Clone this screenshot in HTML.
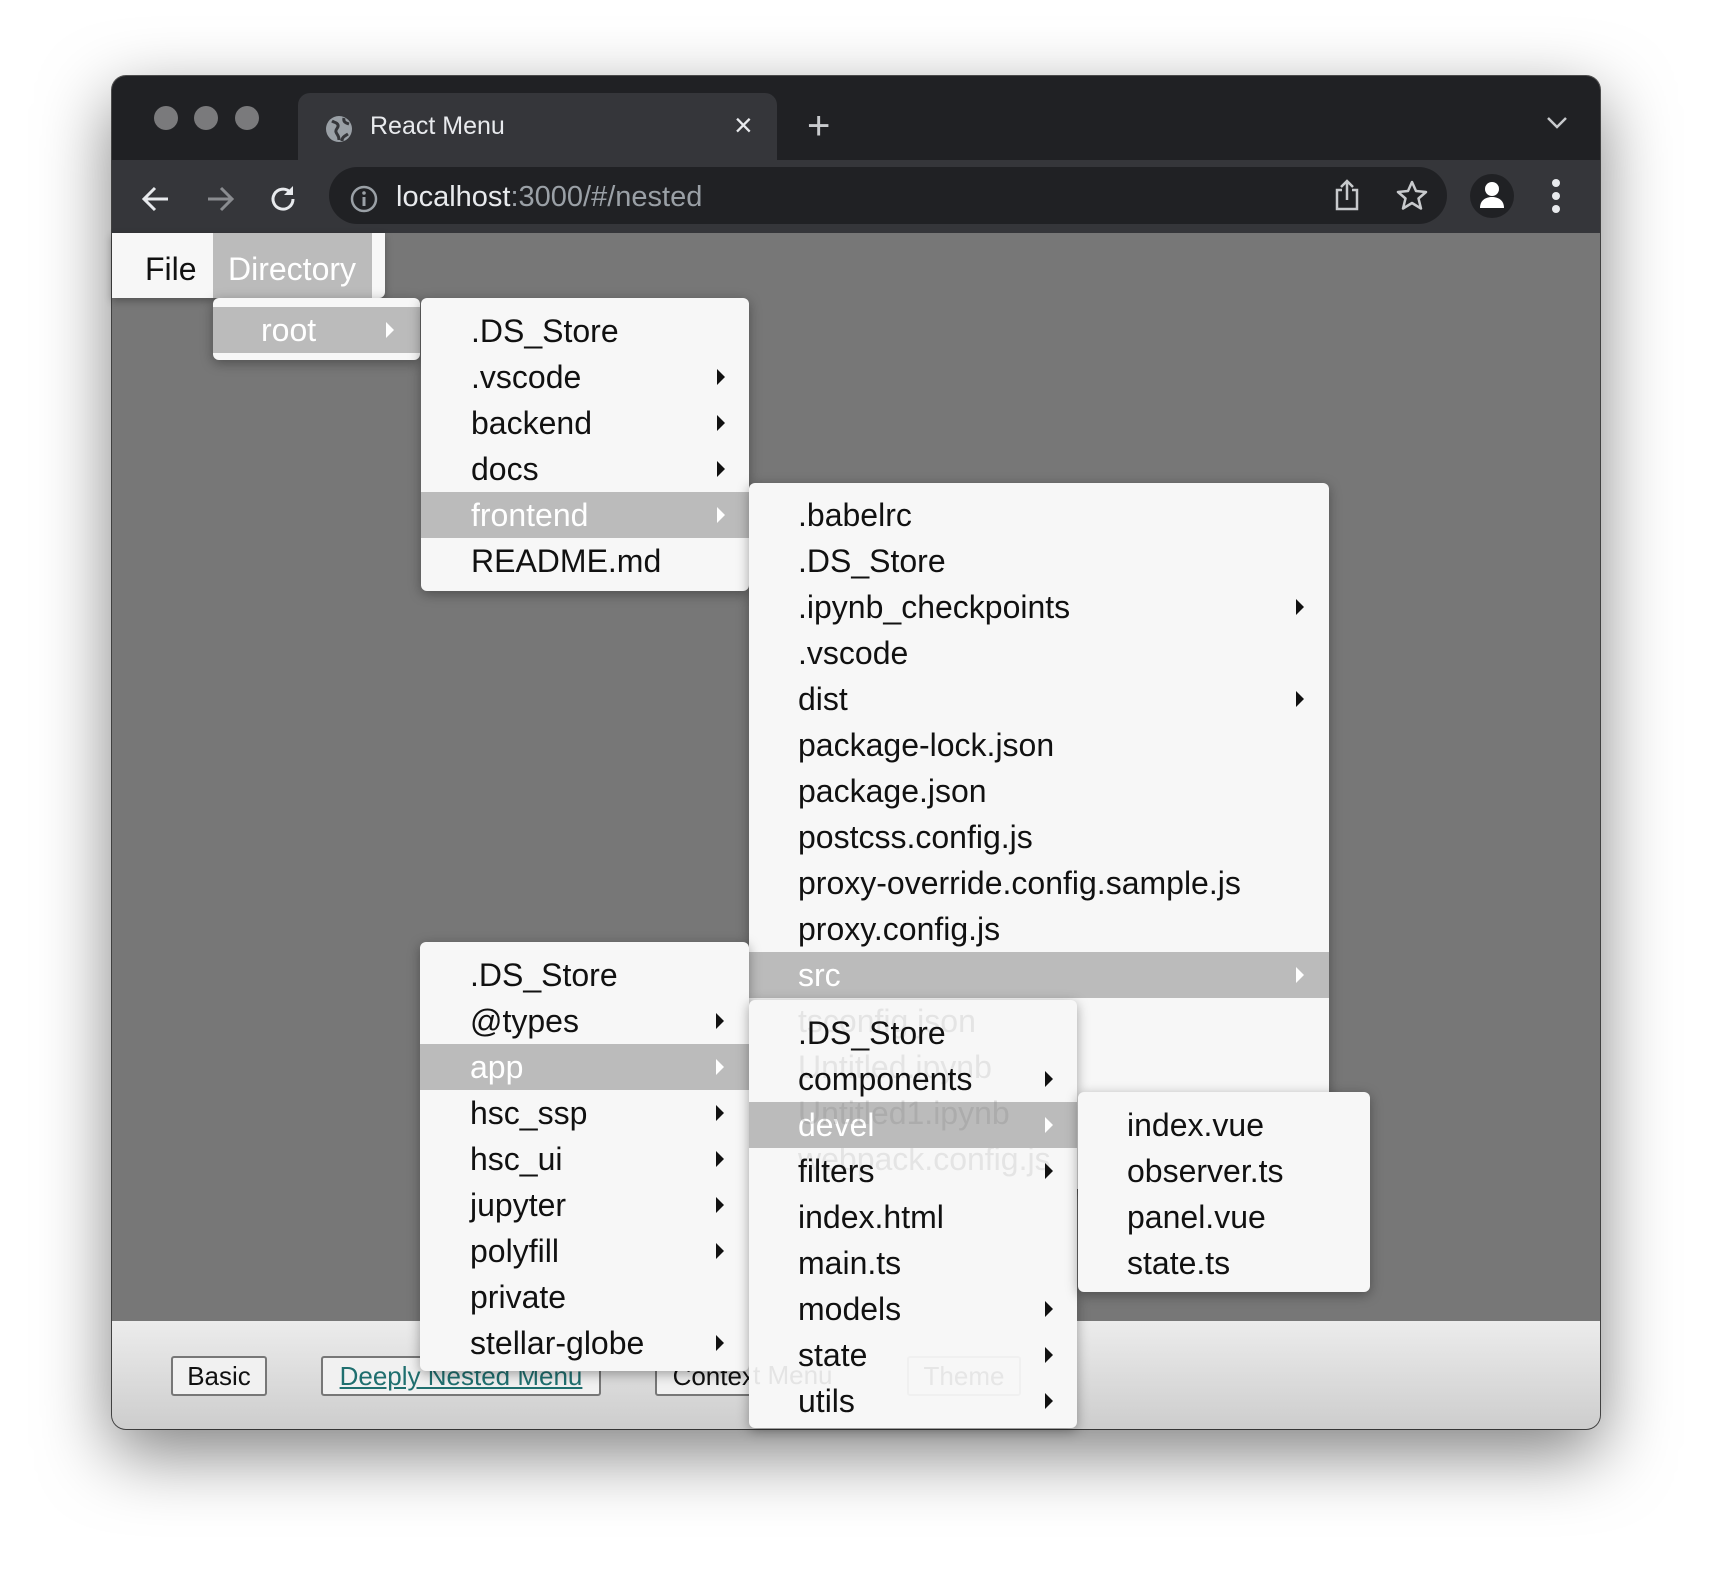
<!DOCTYPE html>
<html><head><meta charset="utf-8"><style>
*{margin:0;padding:0;box-sizing:border-box}
body{width:1712px;height:1578px;background:#fff;position:relative;overflow:hidden;font-family:"Liberation Sans",Arial,sans-serif}
.abs{position:absolute}
.win{left:112px;top:76px;width:1488px;height:1353px;border-radius:14px;overflow:hidden;background:#777;box-shadow:0 24px 70px rgba(0,0,0,.5),0 0 0 1px #555}
.menu{position:absolute;background:#f7f7f7;border-radius:6px;box-shadow:0 3px 12px rgba(0,0,0,.35)}
.it{position:absolute;left:0;right:0;height:46px;line-height:46px;font-size:32px;color:#111;white-space:nowrap}
.it.h{background:#bbb;color:#fff}
.ar{position:absolute;top:15px;width:0;height:0;border-top:8px solid transparent;border-bottom:8px solid transparent;border-left:8px solid #111}
.h .ar{border-left-color:#fff}
.g{color:#e4e4e4}
.btn{position:absolute;top:1356px;height:40px;border:2px solid #777;border-radius:3px;font-size:26px;line-height:36px;text-align:center;background:#f1f1f1;color:#111}
</style></head><body>
<div class="abs win">
 <div class="abs" style="left:0;top:0;width:1488px;height:84px;background:#202124"></div>
 <div class="abs" style="left:42px;top:30px;width:24px;height:24px;border-radius:50%;background:#7a7a7c"></div>
 <div class="abs" style="left:82px;top:30px;width:24px;height:24px;border-radius:50%;background:#7a7a7c"></div>
 <div class="abs" style="left:123px;top:30px;width:24px;height:24px;border-radius:50%;background:#7a7a7c"></div>
 <div class="abs" style="left:186px;top:17px;width:479px;height:70px;background:#35363a;border-radius:12px 12px 0 0"></div>
 <svg class="abs" style="left:212px;top:38px" width="30" height="30" viewBox="0 0 30 30"><circle cx="15" cy="15" r="13" fill="#9aa0a6"/><path d="M8 7c3 2 5 1 6 4s-3 4-2 7 3 3 3 8M20 4c-1 4 2 5 5 6M18 27c0-4 3-5 6-7" stroke="#35363a" stroke-width="3" fill="none"/></svg>
 <div class="abs" style="left:258px;top:36px;font-size:25px;color:#e8eaed">React Menu</div>
 <div class="abs" style="left:622px;top:31px;font-size:32px;color:#e8eaed">×</div>
 <div class="abs" style="left:695px;top:28px;font-size:40px;color:#c8cacd;font-weight:300">+</div>
 <svg class="abs" style="left:1434px;top:40px" width="22" height="14"><path d="M2 2l9 9 9-9" stroke="#c8cacd" stroke-width="2.5" fill="none"/></svg>
 <div class="abs" style="left:0;top:84px;width:1488px;height:73px;background:#35363a"></div>
 <svg class="abs" style="left:28px;top:108px" width="32" height="30"><path d="M28 15H4M15 4L4 15l11 11" stroke="#e8eaed" stroke-width="3" fill="none"/></svg>
 <svg class="abs" style="left:92px;top:108px" width="32" height="30"><path d="M4 15h24M17 4l11 11-11 11" stroke="#8a8c90" stroke-width="3" fill="none"/></svg>
 <svg class="abs" style="left:156px;top:107px" width="32" height="32"><path d="M25 16a10 10 0 1 1-3-7" stroke="#e8eaed" stroke-width="3" fill="none"/><path d="M25 3v9h-9z" fill="#e8eaed"/></svg>
 <div class="abs" style="left:217px;top:91px;width:1118px;height:57px;background:#202124;border-radius:29px"></div>
 <svg class="abs" style="left:238px;top:109px" width="28" height="28"><circle cx="14" cy="14" r="12" stroke="#9aa0a6" stroke-width="2.5" fill="none"/><rect x="12.5" y="12" width="3" height="9" fill="#9aa0a6"/><circle cx="14" cy="8" r="1.8" fill="#9aa0a6"/></svg>
 <div class="abs" style="left:284px;top:105px;font-size:29px;color:#e8eaed">localhost<span style="color:#9aa0a6">:3000/#/nested</span></div>
 <svg class="abs" style="left:1222px;top:102px" width="26" height="34"><path d="M8 12H3v19h20V12h-5M13 22V3M7 9l6-6 6 6" stroke="#c8cacd" stroke-width="2.5" fill="none"/></svg>
 <svg class="abs" style="left:1284px;top:104px" width="32" height="30"><path d="M16 2l4 9 10 1-7.5 6.5 2.5 10-9-5.5-9 5.5 2.5-10L2 12l10-1z" stroke="#c8cacd" stroke-width="2.5" fill="none" stroke-linejoin="round"/></svg>
 <div class="abs" style="left:1358px;top:98px;width:44px;height:44px;border-radius:50%;background:#202124"></div>
 <svg class="abs" style="left:1366px;top:104px" width="28" height="30"><circle cx="14" cy="9" r="7" fill="#fff"/><path d="M2 28c0-8 6-11 12-11s12 3 12 11z" fill="#fff"/></svg>
 <div class="abs" style="left:1440px;top:103px;width:8px;height:8px;border-radius:50%;background:#e8eaed"></div>
 <div class="abs" style="left:1440px;top:116px;width:8px;height:8px;border-radius:50%;background:#e8eaed"></div>
 <div class="abs" style="left:1440px;top:129px;width:8px;height:8px;border-radius:50%;background:#e8eaed"></div>
 <div class="abs" style="left:0;top:1245px;width:1488px;height:108px;background:linear-gradient(#ececec,#cdcdcd)"></div>
</div>

<div class="abs" style="left:112px;top:233px;width:273px;height:65px;background:#f7f7f7;box-shadow:0 3px 8px rgba(0,0,0,.3);border-radius:0 0 6px 0"></div>
<div class="abs" style="left:213px;top:233px;width:159px;height:65px;background:#bbb"></div>
<div class="abs" style="left:145px;top:237px;line-height:65px;font-size:32px;color:#111">File</div>
<div class="abs" style="left:228px;top:237px;line-height:65px;font-size:32px;color:#fff">Directory</div>

<div class="btn" style="left:171px;width:96px">Basic</div>
<div class="btn" style="left:321px;width:280px;color:#1f6f6f;text-decoration:underline">Deeply Nested Menu</div>
<div class="btn" style="left:655px;width:197px">Context Menu</div>
<div class="btn" style="left:907px;width:114px;color:#999;border-color:#bbb">Theme</div>

<div class="menu" style="left:213px;top:298px;width:207px;height:62px">
 <div class="it h" style="top:9px;padding-left:48px">root<div class="ar" style="left:173px"></div></div>
</div>

<div class="menu" style="left:421px;top:298px;width:328px;height:293px">
 <div class="it" style="top:10px;padding-left:50px">.DS_Store</div>
 <div class="it" style="top:56px;padding-left:50px">.vscode<div class="ar" style="left:296px"></div></div>
 <div class="it" style="top:102px;padding-left:50px">backend<div class="ar" style="left:296px"></div></div>
 <div class="it" style="top:148px;padding-left:50px">docs<div class="ar" style="left:296px"></div></div>
 <div class="it h" style="top:194px;padding-left:50px">frontend<div class="ar" style="left:296px"></div></div>
 <div class="it" style="top:240px;padding-left:50px">README.md</div>
</div>

<div class="menu" style="left:749px;top:483px;width:580px;height:706px">
 <div class="it" style="top:9px;padding-left:49px">.babelrc</div>
 <div class="it" style="top:55px;padding-left:49px">.DS_Store</div>
 <div class="it" style="top:101px;padding-left:49px">.ipynb_checkpoints<div class="ar" style="left:547px"></div></div>
 <div class="it" style="top:147px;padding-left:49px">.vscode</div>
 <div class="it" style="top:193px;padding-left:49px">dist<div class="ar" style="left:547px"></div></div>
 <div class="it" style="top:239px;padding-left:49px">package-lock.json</div>
 <div class="it" style="top:285px;padding-left:49px">package.json</div>
 <div class="it" style="top:331px;padding-left:49px">postcss.config.js</div>
 <div class="it" style="top:377px;padding-left:49px">proxy-override.config.sample.js</div>
 <div class="it" style="top:423px;padding-left:49px">proxy.config.js</div>
 <div class="it h" style="top:469px;padding-left:49px">src<div class="ar" style="left:547px"></div></div>
 <div class="it" style="top:515px;padding-left:49px">tsconfig.json</div>
 <div class="it" style="top:561px;padding-left:49px">Untitled.ipynb</div>
 <div class="it" style="top:607px;padding-left:49px">Untitled1.ipynb</div>
 <div class="it" style="top:653px;padding-left:49px">webpack.config.js</div>
</div>

<div class="menu" style="left:420px;top:942px;width:329px;height:429px">
 <div class="it" style="top:10px;padding-left:50px">.DS_Store</div>
 <div class="it" style="top:56px;padding-left:50px">@types<div class="ar" style="left:296px"></div></div>
 <div class="it h" style="top:102px;padding-left:50px">app<div class="ar" style="left:296px"></div></div>
 <div class="it" style="top:148px;padding-left:50px">hsc_ssp<div class="ar" style="left:296px"></div></div>
 <div class="it" style="top:194px;padding-left:50px">hsc_ui<div class="ar" style="left:296px"></div></div>
 <div class="it" style="top:240px;padding-left:50px">jupyter<div class="ar" style="left:296px"></div></div>
 <div class="it" style="top:286px;padding-left:50px">polyfill<div class="ar" style="left:296px"></div></div>
 <div class="it" style="top:332px;padding-left:50px">private</div>
 <div class="it" style="top:378px;padding-left:50px">stellar-globe<div class="ar" style="left:296px"></div></div>
</div>

<div class="menu" style="left:749px;top:1000px;width:328px;height:428px">
 <div class="it g" style="top:-2px;padding-left:49px">tsconfig.json</div>
 <div class="it g" style="top:44px;padding-left:49px">Untitled.ipynb</div>
 <div class="it g" style="top:136px;padding-left:49px">webpack.config.js</div>
 <div class="abs g" style="left:4px;top:357px;font-size:26px;line-height:36px">t Menu</div>
 <div class="abs" style="left:158px;top:356px;width:114px;height:40px;border:2px solid #f0f0f0;border-radius:3px;font-size:26px;line-height:36px;text-align:center;color:#e6e6e6">Theme</div>
 <div class="it" style="top:10px;padding-left:49px;background:transparent">.DS_Store</div>
 <div class="it" style="top:56px;padding-left:49px">components<div class="ar" style="left:296px"></div></div>
 <div class="it h" style="top:102px;padding-left:49px">devel<div class="ar" style="left:296px"></div></div>
 <div class="it" style="top:90px;padding-left:49px;color:rgba(120,120,120,.22)">Untitled1.ipynb</div>
 <div class="it" style="top:148px;padding-left:49px">filters<div class="ar" style="left:296px"></div></div>
 <div class="it" style="top:194px;padding-left:49px">index.html</div>
 <div class="it" style="top:240px;padding-left:49px">main.ts</div>
 <div class="it" style="top:286px;padding-left:49px">models<div class="ar" style="left:296px"></div></div>
 <div class="it" style="top:332px;padding-left:49px">state<div class="ar" style="left:296px"></div></div>
 <div class="it" style="top:378px;padding-left:49px">utils<div class="ar" style="left:296px"></div></div>
</div>

<div class="menu" style="left:1078px;top:1092px;width:292px;height:200px">
 <div class="it" style="top:10px;padding-left:49px">index.vue</div>
 <div class="it" style="top:56px;padding-left:49px">observer.ts</div>
 <div class="it" style="top:102px;padding-left:49px">panel.vue</div>
 <div class="it" style="top:148px;padding-left:49px">state.ts</div>
</div>
</body></html>
